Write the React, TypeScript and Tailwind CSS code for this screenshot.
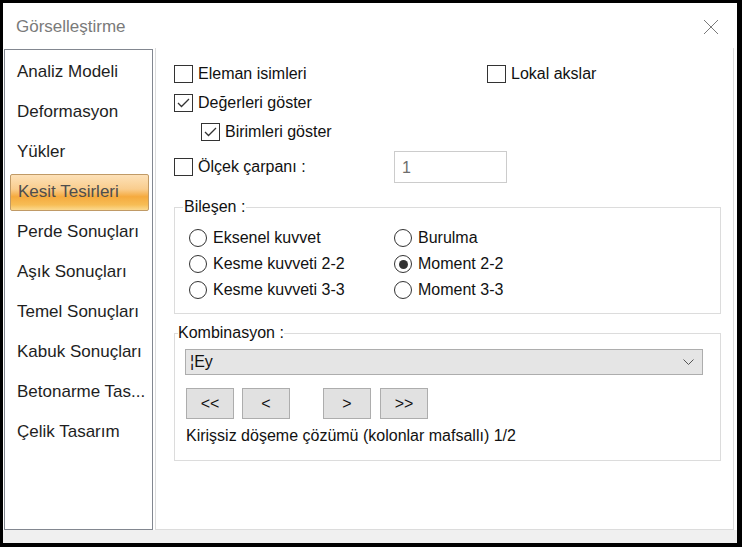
import React, { useState } from "react";

const font = { fontFamily: '"Liberation Sans", Arial, sans-serif' };

const menuItems = [
  "Analiz Modeli",
  "Deformasyon",
  "Yükler",
  "Kesit Tesirleri",
  "Perde Sonuçları",
  "Aşık Sonuçları",
  "Temel Sonuçları",
  "Kabuk Sonuçları",
  "Betonarme Tas...",
  "Çelik Tasarım",
];

function CheckBox({ label, checked }: { label: string; checked?: boolean }) {
  return (
    <div className="flex items-center h-[18px]">
      <div className="w-[19px] h-[18px] border border-[#333333] bg-white flex items-center justify-center">
        {checked && (
          <svg width="13" height="10" viewBox="0 0 13 10">
            <polyline points="1,5 4.5,8.5 12,1" fill="none" stroke="#333" strokeWidth="1.3" />
          </svg>
        )}
      </div>
      <span className="ml-[5px] text-[16px] leading-[18px] text-[#111]">{label}</span>
    </div>
  );
}

function Radio({ label, checked }: { label: string; checked?: boolean }) {
  return (
    <div className="flex items-center h-[26px]">
      <div className="w-[18px] h-[18px] rounded-full border border-[#333333] bg-white flex items-center justify-center">
        {checked && <div className="w-[9px] h-[9px] rounded-full bg-[#333333]" />}
      </div>
      <span className="ml-[6px] text-[16px] text-[#111]">{label}</span>
    </div>
  );
}

function NavButton({ text }: { text: string }) {
  return (
    <button className="w-[48px] h-[31px] bg-[#e1e1e1] border border-[#adadad] text-[16px] text-[#111] flex items-center justify-center">
      {text}
    </button>
  );
}

export default function App() {
  const [selected] = useState(3);

  return (
    <div
      className="w-[742px] h-[547px] bg-black pt-[3px] pl-[3px] pr-[5px] pb-[4px]"
      style={font}
    >
      <div className="w-full h-full bg-white flex flex-col">
        {/* title bar */}
        <div className="h-[45px] flex items-center justify-between pl-[13px] pr-[18px] pt-[2px]">
          <span className="text-[17px] text-[#7a7a7a]">Görselleştirme</span>
          <svg width="16" height="16" viewBox="0 0 16 16">
            <path d="M1 1 L15 15 M15 1 L1 15" stroke="#7a7a7a" strokeWidth="1" />
          </svg>
        </div>

        <div className="flex-1 flex">
          {/* left menu */}
          <div className="ml-[1px] mt-[1px] w-[149px] border border-[#828790] pt-[2px]">
            {menuItems.map((item, i) =>
              i === selected ? (
                <div key={item} className="h-[40px] flex items-center pl-[5px] pr-[3px]">
                  <div className="w-full h-[37px] rounded-[2px] border border-[#c09a66] bg-[linear-gradient(to_bottom,#fde1b8_0%,#f9cd8e_40%,#f5aa3e_62%,#f7bd55_85%,#fbd98f_100%)] flex items-center pl-[7px]">
                    <span className="text-[17px] text-[#4d4d4d]">{item}</span>
                  </div>
                </div>
              ) : (
                <div key={item} className="h-[40px] flex items-center pl-[12px]">
                  <span className="text-[17px] text-[#1e1e1e] whitespace-nowrap">{item}</span>
                </div>
              )
            )}
          </div>

          {/* content */}
          <div className="flex-1 ml-[2px] mr-[3px] border-l border-r border-b border-[#dcdcdc] pl-[18px] pr-[12px] pt-[17px]">
            <div className="flex">
              <div className="w-[313px]">
                <CheckBox label="Eleman isimleri" />
              </div>
              <CheckBox label="Lokal akslar" />
            </div>
            <div className="mt-[11px]">
              <CheckBox label="Değerleri göster" checked />
            </div>
            <div className="mt-[11px] ml-[27px]">
              <CheckBox label="Birimleri göster" checked />
            </div>
            <div className="mt-[10px] h-[32px] flex items-center">
              <div className="w-[220px]">
                <CheckBox label="Ölçek çarpanı :" />
              </div>
              <div className="w-[113px] h-[32px] border border-[#cccccc] flex items-start pl-[7px] pt-[4px] text-[16px] text-[#6d6d6d]">
                1
              </div>
            </div>

            <fieldset className="mt-[15px] border border-[#dcdcdc] pl-[8px] pr-[8px] pb-[10px]">
              <legend className="px-[1px] text-[16px] leading-[18px] text-[#111]">Bileşen :</legend>
              <div className="ml-[6px] pt-[9px] grid grid-cols-[205px_1fr]">
                <Radio label="Eksenel kuvvet" />
                <Radio label="Burulma" />
                <Radio label="Kesme kuvveti 2-2" />
                <Radio label="Moment 2-2" checked />
                <Radio label="Kesme kuvveti 3-3" />
                <Radio label="Moment 3-3" />
              </div>
            </fieldset>

            <fieldset className="mt-[10px] border border-[#dcdcdc] pl-[3px] pr-[17px] pb-[14px]">
              <legend className="px-[0px] text-[16px] leading-[18px] text-[#111]">Kombinasyon :</legend>
              <div className="ml-[7px] mt-[7px] h-[26px] bg-[#e5e5e5] border border-[#adadad] flex items-center justify-between pl-[4px] pr-[8px]">
                <span className="text-[16px] text-[#111]">¦Ey</span>
                <svg width="11" height="7" viewBox="0 0 11 7">
                  <polyline points="0.5,0.5 5.5,5.5 10.5,0.5" fill="none" stroke="#555" strokeWidth="1" />
                </svg>
              </div>
              <div className="ml-[8px] mt-[13px] flex">
                <NavButton text="<<" />
                <div className="ml-[8px]">
                  <NavButton text="<" />
                </div>
                <div className="ml-[33px]">
                  <NavButton text=">" />
                </div>
                <div className="ml-[9px]">
                  <NavButton text=">>" />
                </div>
              </div>
              <div className="ml-[8px] mt-[7px] h-[20px] flex items-center text-[16px] text-[#111]">
                Kirişsiz döşeme çözümü (kolonlar mafsallı) 1/2
              </div>
            </fieldset>
          </div>
        </div>

        {/* bottom strip */}
        <div className="h-[13px] bg-[#f0f0f0]" />
      </div>
    </div>
  );
}
